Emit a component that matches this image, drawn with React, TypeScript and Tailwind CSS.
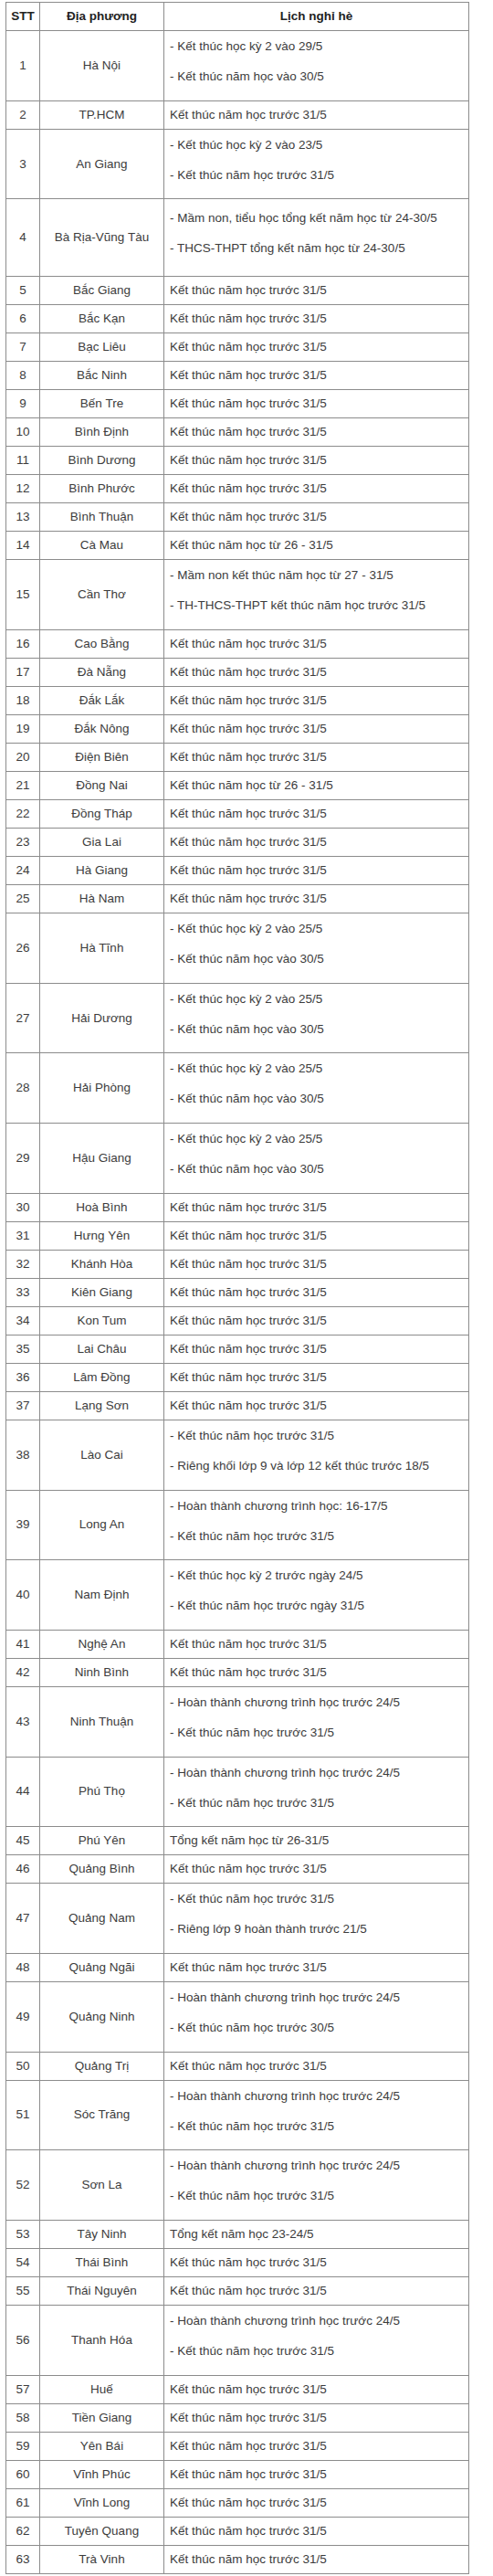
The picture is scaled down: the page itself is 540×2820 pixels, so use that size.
import React from "react"

type Row = { name: string; lines: string[]; tall?: boolean }

const R = (name: string, ...lines: string[]): Row => ({ name, lines })

const KT = "Kết thúc năm học trước 31/5"

const rows: Row[] = [
  R("Hà Nội", "- Kết thúc học kỳ 2 vào 29/5", "- Kết thúc năm học vào 30/5"),
  R("TP.HCM", KT),
  R("An Giang", "- Kết thúc học kỳ 2 vào 23/5", "- Kết thúc năm học trước 31/5"),
  { name: "Bà Rịa-Vũng Tàu", lines: ["- Mầm non, tiểu học tổng kết năm học từ 24-30/5", "- THCS-THPT tổng kết năm học từ 24-30/5"], tall: true },
  R("Bắc Giang", KT),
  R("Bắc Kạn", KT),
  R("Bạc Liêu", KT),
  R("Bắc Ninh", KT),
  R("Bến Tre", KT),
  R("Bình Định", KT),
  R("Bình Dương", KT),
  R("Bình Phước", KT),
  R("Bình Thuận", KT),
  R("Cà Mau", "Kết thúc năm học từ 26 - 31/5"),
  R("Cần Thơ", "- Mầm non kết thúc năm học từ 27 - 31/5", "- TH-THCS-THPT kết thúc năm học trước 31/5"),
  R("Cao Bằng", KT),
  R("Đà Nẵng", KT),
  R("Đắk Lắk", KT),
  R("Đắk Nông", KT),
  R("Điện Biên", KT),
  R("Đồng Nai", "Kết thúc năm học từ 26 - 31/5"),
  R("Đồng Tháp", KT),
  R("Gia Lai", KT),
  R("Hà Giang", KT),
  R("Hà Nam", KT),
  R("Hà Tĩnh", "- Kết thúc học kỳ 2 vào 25/5", "- Kết thúc năm học vào 30/5"),
  R("Hải Dương", "- Kết thúc học kỳ 2 vào 25/5", "- Kết thúc năm học vào 30/5"),
  R("Hải Phòng", "- Kết thúc học kỳ 2 vào 25/5", "- Kết thúc năm học vào 30/5"),
  R("Hậu Giang", "- Kết thúc học kỳ 2 vào 25/5", "- Kết thúc năm học vào 30/5"),
  R("Hoà Bình", KT),
  R("Hưng Yên", KT),
  R("Khánh Hòa", KT),
  R("Kiên Giang", KT),
  R("Kon Tum", KT),
  R("Lai Châu", KT),
  R("Lâm Đồng", KT),
  R("Lạng Sơn", KT),
  R("Lào Cai", "- Kết thúc năm học trước 31/5", "- Riêng khối lớp 9 và lớp 12 kết thúc trước 18/5"),
  R("Long An", "- Hoàn thành chương trình học: 16-17/5", "- Kết thúc năm học trước 31/5"),
  R("Nam Định", "- Kết thúc học kỳ 2 trước ngày 24/5", "- Kết thúc năm học trước ngày 31/5"),
  R("Nghệ An", KT),
  R("Ninh Bình", KT),
  R("Ninh Thuận", "- Hoàn thành chương trình học trước 24/5", "- Kết thúc năm học trước 31/5"),
  R("Phú Thọ", "- Hoàn thành chương trình học trước 24/5", "- Kết thúc năm học trước 31/5"),
  R("Phú Yên", "Tổng kết năm học từ 26-31/5"),
  R("Quảng Bình", KT),
  R("Quảng Nam", "- Kết thúc năm học trước 31/5", "- Riêng lớp 9 hoàn thành trước 21/5"),
  R("Quảng Ngãi", KT),
  R("Quảng Ninh", "- Hoàn thành chương trình học trước 24/5", "- Kết thúc năm học trước 30/5"),
  R("Quảng Trị", KT),
  R("Sóc Trăng", "- Hoàn thành chương trình học trước 24/5", "- Kết thúc năm học trước 31/5"),
  R("Sơn La", "- Hoàn thành chương trình học trước 24/5", "- Kết thúc năm học trước 31/5"),
  R("Tây Ninh", "Tổng kết năm học 23-24/5"),
  R("Thái Bình", KT),
  R("Thái Nguyên", KT),
  R("Thanh Hóa", "- Hoàn thành chương trình học trước 24/5", "- Kết thúc năm học trước 31/5"),
  R("Huế", KT),
  R("Tiền Giang", KT),
  R("Yên Bái", KT),
  R("Vĩnh Phúc", KT),
  R("Vĩnh Long", KT),
  R("Tuyên Quang", KT),
  R("Trà Vinh", KT),
]

export default function App() {
  return (
    <div className="bg-white min-h-screen pt-[2px] font-['Liberation_Sans',Arial,sans-serif] text-[13.5px] leading-[16px] text-[#3c3c3c]">
      <div className="ml-[6px] w-[508px] border border-[#8c8c8c]">
        {/* Header */}
        <div className="grid grid-cols-[36px_136px_1fr] h-[30px] font-bold text-[#222]">
          <div className="flex items-center justify-center">STT</div>
          <div className="flex items-center justify-center border-l border-[#8c8c8c]">Địa phương</div>
          <div className="flex items-center justify-center border-l border-[#8c8c8c]">Lịch nghỉ hè</div>
        </div>

        {rows.map((r, i) => {
          const multi = r.lines.length > 1
          const h = r.tall ? "h-[85px]" : multi ? "h-[76.7px]" : "h-[31px]"
          const body = !multi
            ? "justify-center"
            : r.tall
              ? "justify-start pt-[13px] gap-[17px]"
              : "justify-start pt-[9px] gap-[17px]"
          return (
            <div key={i} className={`grid grid-cols-[36px_136px_1fr] border-t border-[#8c8c8c] ${h}`}>
              <div className="flex items-center justify-center">{i + 1}</div>
              <div className="flex items-center justify-center border-l border-[#8c8c8c]">{r.name}</div>
              <div className={`flex flex-col pl-[6px] border-l border-[#8c8c8c] ${body}`}>
                {r.lines.map((l, j) => (
                  <p key={j}>{l}</p>
                ))}
              </div>
            </div>
          )
        })}
      </div>
    </div>
  )
}
